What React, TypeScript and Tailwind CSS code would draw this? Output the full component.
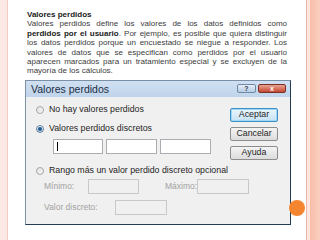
import type { ReactNode } from 'react';

function Radio({ checked = false }: { checked?: boolean }) {
  return (
    <span
      className={
        checked
          ? 'flex h-[8px] w-[8px] shrink-0 items-center justify-center rounded-full border border-[#6b84a3] bg-gradient-to-b from-[#e9eef4] to-[#c6d2e0]'
          : 'block h-[8px] w-[8px] shrink-0 rounded-full border border-[#a6a6a6] bg-gradient-to-br from-[#e2e2e2] to-[#f7f7f7]'
      }
    >
      {checked && <span className="block h-[4px] w-[4px] rounded-full bg-[#1f5a94]" />}
    </span>
  );
}

function Option({ checked, children }: { checked?: boolean; children: ReactNode }) {
  return (
    <div className="flex h-[12px] items-center gap-[5px] whitespace-nowrap text-[8.8px] leading-none text-[#1e1e1e]">
      <Radio checked={checked} />
      <span>{children}</span>
    </div>
  );
}

function Field({ width, disabled = false, caret = false }: { width: string; disabled?: boolean; caret?: boolean }) {
  return (
    <div
      className={`${width} flex h-[15px] shrink-0 items-center border ${
        disabled ? 'border-[#c9c9c9] bg-[#f0f0f0]' : 'border-[#abadb3] bg-white'
      }`}
    >
      {caret && <span className="ml-[3px] block h-[9px] w-px bg-black" />}
    </div>
  );
}

function DialogButton({ label, primary = false }: { label: string; primary?: boolean }) {
  return (
    <div
      className={`flex h-[14px] w-[48px] items-center justify-center rounded-[2px] border bg-gradient-to-b text-[8.8px] leading-none text-[#1e1e1e] ${
        primary
          ? 'border-[#3c8fc9] from-[#eaf6fd] to-[#c6e2f4] shadow-[inset_0_0_0_1px_#9fd8f3]'
          : 'border-[#8d8d8d] from-[#f4f4f4] to-[#dcdcdc]'
      }`}
    >
      {label}
    </div>
  );
}

export default function App() {
  return (
    <div className="relative flex h-[240px] w-[320px] overflow-hidden bg-white font-['Liberation_Sans',Arial,sans-serif]">
      {/* franja izquierda */}
      <div className="w-[8px] shrink-0 border-r border-[#f2cbc4] bg-[#fce9e5]" />

      <div className="flex w-[298px] shrink-0 flex-col">
        <div className="ml-[19px] mt-[10px] w-[260px] text-[8px] leading-[9.4px] text-[#3c3c3c]">
          <div className="font-bold text-[#1a1a1a]">Valores perdidos</div>
          <div className="text-justify [text-align-last:justify]">
            Valores perdidos define los valores de los datos definidos como
          </div>
          <div className="text-justify [text-align-last:justify]">
            <span className="font-bold text-[#1a1a1a]">perdidos por el usuario</span>. Por ejemplo, es posible que quiera distinguir
          </div>
          <div className="text-justify [text-align-last:justify]">
            los datos perdidos porque un encuestado se niegue a responder. Los
          </div>
          <div className="text-justify [text-align-last:justify]">
            valores de datos que se especifican como perdidos por el usuario
          </div>
          <div className="text-justify [text-align-last:justify]">
            aparecen marcados para un tratamiento especial y se excluyen de la
          </div>
          <div>mayoría de los cálculos.</div>
        </div>

        {/* cuadro de diálogo */}
        <div className="ml-[17px] mt-[4px] flex h-[145px] w-[266px] flex-col overflow-hidden border border-[#7890a8] border-b-[#243d55] border-r-[#243d55]">
          <div className="flex h-[16px] shrink-0 items-start justify-between bg-gradient-to-b from-[#d0e0f1] to-[#bfd4eb] pl-[5px] pr-[4px]">
            <span className="mt-[3px] text-[10.5px] leading-none text-[#1b2d44]">Valores perdidos</span>
            <div className="mt-[3px] flex gap-[2px]">
              <div className="flex h-[9px] w-[19px] items-center justify-center rounded-[2px] border border-[#7089a6] bg-gradient-to-b from-[#e6eef7] to-[#b7cbe2] text-[7px] font-bold leading-none text-[#2a3b52]">
                ?
              </div>
              <div className="flex h-[9px] w-[28px] items-center justify-center rounded-[2px] border border-[#7a3226] bg-gradient-to-b from-[#e9a393] to-[#c4452f] text-[7px] font-bold leading-none text-white">
                x
              </div>
            </div>
          </div>

          <div className="flex flex-1 bg-[#f0f0f0]">
            <div className="flex min-w-0 flex-1 flex-col pl-[10px] pt-[7px]">
              <Option>No hay valores perdidos</Option>
              <div className="mt-[7px]">
                <Option checked>Valores perdidos discretos</Option>
              </div>
              <div className="ml-[17px] mt-[4px] flex gap-[3px]">
                <Field width="w-[50px]" caret />
                <Field width="w-[51px]" />
                <Field width="w-[51px]" />
              </div>
              <div className="mt-[11px]">
                <Option>Rango más un valor perdido discreto opcional</Option>
              </div>
              <div className="ml-[8px] mt-[2px] flex items-center whitespace-nowrap text-[8.5px] leading-none text-[#a2a2a2]">
                <span className="w-[44px] shrink-0">Mínimo:</span>
                <Field width="w-[51px]" disabled />
                <span className="ml-[26px] w-[32px] shrink-0">Máximo:</span>
                <Field width="w-[52px]" disabled />
              </div>
              <div className="ml-[8px] mt-[6px] flex items-center whitespace-nowrap text-[8.5px] leading-none text-[#a2a2a2]">
                <span className="w-[71px] shrink-0">Valor discreto:</span>
                <Field width="w-[52px]" disabled />
              </div>
            </div>

            <div className="mr-[12px] flex w-[48px] shrink-0 flex-col gap-[5px] pt-[11px]">
              <DialogButton label="Aceptar" primary />
              <DialogButton label="Cancelar" />
              <DialogButton label="Ayuda" />
            </div>
          </div>
        </div>
      </div>

      {/* franja derecha */}
      <div className="flex flex-1 border-l border-[#efb5a5]">
        <div className="w-[3px] bg-[#fde7e0]" />
        <div className="flex-1 bg-gradient-to-r from-[#f8bda9] to-[#fbcfc0]" />
      </div>

      <div className="absolute left-[289px] top-[200px] h-[16px] w-[16px] rounded-full bg-[#f5852f]" />
    </div>
  );
}
